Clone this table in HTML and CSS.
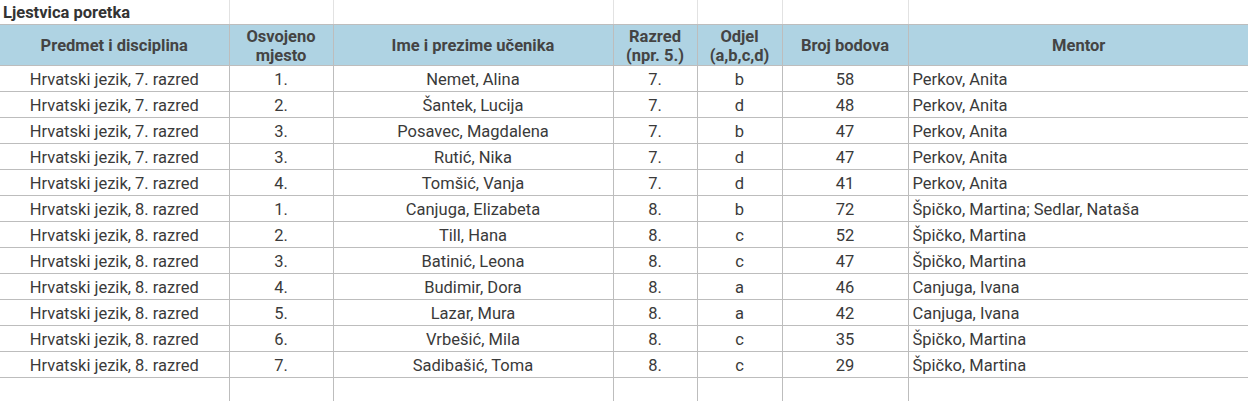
FILE: index.html
```html
<!DOCTYPE html>
<html lang="hr">
<head>
<meta charset="utf-8">
<title>Ljestvica poretka</title>
<link rel="stylesheet" href="styles.css">
</head>
<body>
<table class="sheet">
  <colgroup>
    <col class="c1"><col class="c2"><col class="c3"><col class="c4"><col class="c5"><col class="c6"><col class="c7">
  </colgroup>
  <tr class="title-row">
    <td class="title">Ljestvica poretka</td><td></td><td></td><td></td><td></td><td></td><td></td>
  </tr>
  <tr class="head">
    <th>Predmet i disciplina</th>
    <th>Osvojeno<br>mjesto</th>
    <th>Ime i prezime učenika</th>
    <th>Razred<br>(npr. 5.)</th>
    <th>Odjel<br>(a,b,c,d)</th>
    <th>Broj bodova</th>
    <th>Mentor</th>
  </tr>
  <tr><td>Hrvatski jezik, 7. razred</td><td>1.</td><td>Nemet, Alina</td><td>7.</td><td>b</td><td>58</td><td class="left">Perkov, Anita</td></tr>
  <tr><td>Hrvatski jezik, 7. razred</td><td>2.</td><td>Šantek, Lucija</td><td>7.</td><td>d</td><td>48</td><td class="left">Perkov, Anita</td></tr>
  <tr><td>Hrvatski jezik, 7. razred</td><td>3.</td><td>Posavec, Magdalena</td><td>7.</td><td>b</td><td>47</td><td class="left">Perkov, Anita</td></tr>
  <tr><td>Hrvatski jezik, 7. razred</td><td>3.</td><td>Rutić, Nika</td><td>7.</td><td>d</td><td>47</td><td class="left">Perkov, Anita</td></tr>
  <tr><td>Hrvatski jezik, 7. razred</td><td>4.</td><td>Tomšić, Vanja</td><td>7.</td><td>d</td><td>41</td><td class="left">Perkov, Anita</td></tr>
  <tr><td>Hrvatski jezik, 8. razred</td><td>1.</td><td>Canjuga, Elizabeta</td><td>8.</td><td>b</td><td>72</td><td class="left">Špičko, Martina; Sedlar, Nataša</td></tr>
  <tr><td>Hrvatski jezik, 8. razred</td><td>2.</td><td>Till, Hana</td><td>8.</td><td>c</td><td>52</td><td class="left">Špičko, Martina</td></tr>
  <tr><td>Hrvatski jezik, 8. razred</td><td>3.</td><td>Batinić, Leona</td><td>8.</td><td>c</td><td>47</td><td class="left">Špičko, Martina</td></tr>
  <tr><td>Hrvatski jezik, 8. razred</td><td>4.</td><td>Budimir, Dora</td><td>8.</td><td>a</td><td>46</td><td class="left">Canjuga, Ivana</td></tr>
  <tr><td>Hrvatski jezik, 8. razred</td><td>5.</td><td>Lazar, Mura</td><td>8.</td><td>a</td><td>42</td><td class="left">Canjuga, Ivana</td></tr>
  <tr><td>Hrvatski jezik, 8. razred</td><td>6.</td><td>Vrbešić, Mila</td><td>8.</td><td>c</td><td>35</td><td class="left">Špičko, Martina</td></tr>
  <tr><td>Hrvatski jezik, 8. razred</td><td>7.</td><td>Sadibašić, Toma</td><td>8.</td><td>c</td><td>29</td><td class="left">Špičko, Martina</td></tr>
  <tr class="empty-row"><td></td><td></td><td></td><td></td><td></td><td></td><td></td></tr>
</table>
</body>
</html>
```
FILE: styles.css
```css
html, body {
  margin: 0;
  padding: 0;
  background: #ffffff;
}

body {
  font-family: Roboto, "Liberation Sans", Arial, sans-serif;
  font-size: 16.5px;
  color: #3a3a3a;
  overflow: hidden;
}

.sheet {
  border-collapse: collapse;
  table-layout: fixed;
  width: 1249px;
}

.c1 { width: 229px; }
.c2 { width: 104px; }
.c3 { width: 280px; }
.c4 { width: 84px; }
.c5 { width: 85px; }
.c6 { width: 126px; }
.c7 { width: 341px; }

.sheet td,
.sheet th {
  padding: 2px 4px 0;
  text-align: center;
  white-space: nowrap;
  overflow: hidden;
  border: 1px solid #bdbdbd;
  border-left: none;
  height: 23px;
  line-height: 19px;
  vertical-align: middle;
}

.sheet td:last-child,
.sheet th:last-child {
  border-right: none;
}

.sheet td.left {
  text-align: left;
}

.title-row td {
  height: 24px;
  padding: 0 3px;
  border-top: none;
  border-right: 1px solid #e2e2e2;
  text-align: left;
  vertical-align: middle;
}

.title-row td.title {
  font-weight: 700;
  color: #333333;
}

.head th {
  background: #afd3e3;
  font-weight: 700;
  color: #444444;
  height: 39px;
  padding: 1px 4px 0;
  line-height: 19px;
}

.empty-row td {
  height: 23px;
  border-bottom: none;
}
```
